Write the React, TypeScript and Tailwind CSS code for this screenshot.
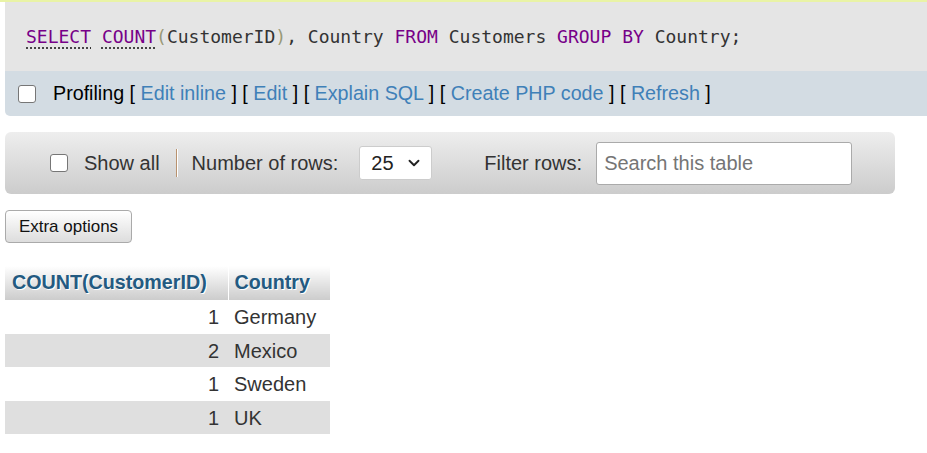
import { ChevronDown } from 'lucide-react'

const rows = [
  { count: 1, country: 'Germany' },
  { count: 2, country: 'Mexico' },
  { count: 1, country: 'Sweden' },
  { count: 1, country: 'UK' },
]

function Box({ className = '' }: { className?: string }) {
  return (
    <span
      className={`inline-block w-[18px] h-[18px] rounded-[3px] border border-[#767676] bg-white ${className}`}
    />
  )
}

function Kw({ children, dotted }: { children: string; dotted?: boolean }) {
  return (
    <span
      className={`text-[#770088] ${dotted ? 'underline decoration-dotted decoration-[#333] underline-offset-[5px]' : ''}`}
    >
      {children}
    </span>
  )
}

export default function App() {
  return (
    <div className="min-h-[453px] bg-white font-['Liberation_Sans',Arial,sans-serif] text-[20px] text-[#333]">
      <div className="h-[2px] bg-[#e9f3a6]" />

      {/* sql query */}
      <div className="ml-[5px] h-[69px] bg-[#e5e5e5] flex items-center pl-[21px] font-['DejaVu_Sans_Mono',monospace] text-[18px] text-[#333] whitespace-pre">
        <span>
          <Kw dotted>SELECT</Kw> <Kw dotted>COUNT</Kw>
          <span className="text-[#999977]">(</span>CustomerID<span className="text-[#999977]">)</span>, Country{' '}
          <Kw>FROM</Kw> Customers <Kw>GROUP</Kw> <Kw>BY</Kw> Country;
        </span>
      </div>

      {/* profiling links */}
      <div className="ml-[5px] h-[45px] bg-[#d3dce3] rounded-bl-[5px] flex items-center pl-[13px] text-black text-[19.7px]">
        <Box className="mr-[17px]" />
        <span>
          Profiling [ <a className="text-[#3f80b8]">Edit inline</a> ] [ <a className="text-[#3f80b8]">Edit</a> ] [{' '}
          <a className="text-[#3f80b8]">Explain SQL</a> ] [ <a className="text-[#3f80b8]">Create PHP code</a> ] [{' '}
          <a className="text-[#3f80b8]">Refresh</a> ]
        </span>
      </div>

      {/* navigation */}
      <div className="mx-[5px] mt-[16px] w-[890px] h-[62px] rounded-[6px] bg-gradient-to-b from-[#eeeeee] to-[#cccccc] flex items-center pl-[45px]">
        <Box className="mr-[16px]" />
        <span>Show all</span>
        <span className="ml-[16px] mr-[14px] h-[28px] w-[2px] border-l border-[#b8926f] border-r border-r-white" />
        <span>Number of rows:</span>
        <div className="ml-[21px] w-[73px] h-[34px] bg-white border border-[#cccccc] rounded-[3px] flex items-center justify-between pl-[11px] pr-[8px] text-[#222]">
          <span>25</span>
          <ChevronDown className="w-[18px] h-[18px] text-[#222]" strokeWidth={2.5} />
        </div>
        <span className="ml-[52px]">Filter rows:</span>
        <div className="ml-[14px] w-[256px] h-[43px] bg-white border border-[#aaaaaa] rounded-[3px] flex items-center pl-[7px] text-[#757575]">
          Search this table
        </div>
      </div>

      {/* extra options */}
      <div className="mx-[5px] mt-[16px]">
        <button className="w-[127px] h-[33px] rounded-[4px] border border-[#aaaaaa] bg-gradient-to-b from-[#ffffff] to-[#dddddd] text-[17px] text-[#111]">
          Extra options
        </button>
      </div>

      {/* result table */}
      <table className="ml-[5px] mt-[23px] border-collapse">
        <thead>
          <tr className="h-[34px]">
            <th className="w-[223px] px-[7px] text-left font-bold text-[19.7px] text-[#235a81] bg-gradient-to-b from-[#ffffff] to-[#cccccc] border-r border-r-white [text-shadow:1px_1px_0_#fff]">
              COUNT(CustomerID)
            </th>
            <th className="w-[102px] px-[6px] text-left font-bold text-[19.7px] text-[#235a81] bg-gradient-to-b from-[#ffffff] to-[#cccccc] [text-shadow:1px_1px_0_#fff]">
              Country
            </th>
          </tr>
        </thead>
        <tbody>
          {rows.map((r, i) => (
            <tr key={r.country} className={`h-[33.5px] ${i % 2 ? 'bg-[#dfdfdf]' : 'bg-white'}`}>
              <td className="text-right pr-[9px]">{r.count}</td>
              <td className="px-[6px]">{r.country}</td>
            </tr>
          ))}
        </tbody>
      </table>
    </div>
  )
}
